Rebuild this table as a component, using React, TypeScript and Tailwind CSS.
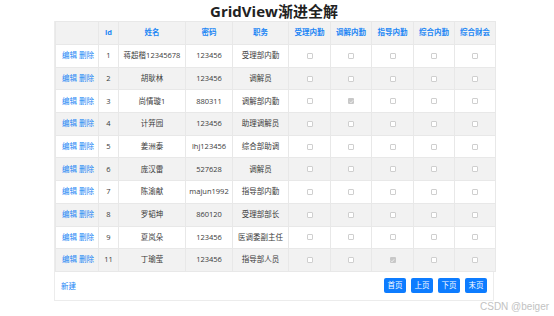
import React from "react";

const rows: [string, string, string, string, number[]][] = [
  ["1", "蒋超楷12345678", "123456", "受理部内勤", []],
  ["2", "胡耿林", "123456", "调解员", []],
  ["3", "尚情璇1", "880311", "调解部内勤", [1]],
  ["4", "计笄园", "123456", "助理调解员", []],
  ["5", "姜洲泰", "lhj123456", "综合部助调", []],
  ["6", "庞汉雷", "527628", "调解员", []],
  ["7", "陈渝献", "majun1992", "指导部内勤", []],
  ["8", "罗韬坤", "860120", "受理部部长", []],
  ["9", "夏岚朵", "123456", "医调委副主任", []],
  ["11", "丁瑜莹", "123456", "指导部人员", [2]],
];

const widths = [43, 20, 67, 47, 56, 42, 41, 42, 41, 41];
const heads = ["", "id", "姓名", "密码", "职务", "受理内勤", "调解内勤", "指导内勤", "综合内勤", "综合财会"];

function Box({ checked }: { checked: boolean }) {
  return checked ? (
    <span className="inline-flex w-[6px] h-[6px] rounded-[1px] bg-[#c8c8c8] items-center justify-center">
      <svg width="5" height="5" viewBox="0 0 6 6">
        <path d="M1 3.2 L2.4 4.6 L5 1.6" stroke="#f4f4f4" strokeWidth="1" fill="none" />
      </svg>
    </span>
  ) : (
    <span className="inline-block w-[6px] h-[6px] rounded-[1px] border border-[#cfcfcf] bg-white" />
  );
}

export default function App() {
  return (
    <div
      className="w-[554px] h-[316px] bg-white relative overflow-hidden"
      style={{ fontFamily: '"Open Sans","Noto Sans CJK SC",sans-serif' }}
    >
      <div className="w-[440px] ml-[54px]">
        <div className="h-[21px] flex items-center justify-center text-[15px] font-bold text-[#222] leading-none pt-[1px]">
          GridView渐进全解
        </div>
        <div className="border border-[#ececec] border-t-0">
          <table className="w-[440px] table-fixed border-collapse text-[7.5px] text-[#3a3a3a]">
            <colgroup>
              {widths.map((w, i) => (
                <col key={i} style={{ width: w }} />
              ))}
            </colgroup>
            <thead>
              <tr className="h-[23px] bg-[#f2f2f2]">
                {heads.map((h, i) => (
                  <th key={i} className="border border-[#e8e8e8] font-bold text-[#2186f5] text-center p-0">
                    {h}
                  </th>
                ))}
              </tr>
            </thead>
            <tbody>
              {rows.map((r, ri) => (
                <tr key={ri} className={`h-[22.7px] ${ri % 2 === 1 ? "bg-[#f2f2f2]" : "bg-white"}`}>
                  <td className="border border-[#e8e8e8] text-left pl-[6px] text-[#2186f5] p-0 whitespace-nowrap">
                    编辑 删除
                  </td>
                  <td className="border border-[#e8e8e8] text-center p-0">{r[0]}</td>
                  <td className="border border-[#e8e8e8] text-center p-0 whitespace-nowrap">{r[1]}</td>
                  <td className="border border-[#e8e8e8] text-center p-0">{r[2]}</td>
                  <td className="border border-[#e8e8e8] text-center p-0 whitespace-nowrap">{r[3]}</td>
                  {[0, 1, 2, 3, 4].map((c) => (
                    <td key={c} className="border border-[#e8e8e8] text-center p-0">
                      <div className="flex justify-center items-center">
                        <Box checked={r[4].includes(c)} />
                      </div>
                    </td>
                  ))}
                </tr>
              ))}
            </tbody>
          </table>
          <div className="h-[28px] flex items-center justify-between pl-[6px] pr-[6px] text-[7.5px]">
            <span className="text-[#2186f5] mt-[2px]">新建</span>
            <div className="flex gap-[5px]">
              {["首页", "上页", "下页", "末页"].map((b) => (
                <span
                  key={b}
                  className="w-[22px] h-[15px] rounded-[2px] bg-[#0d7cff] text-white flex items-center justify-center"
                >
                  {b}
                </span>
              ))}
            </div>
          </div>
        </div>
      </div>
      <div
        className="absolute left-[480px] top-[302px] text-[10px] text-[#c2c2c2] whitespace-nowrap leading-none"
        style={{ fontFamily: '"Liberation Sans",sans-serif' }}
      >
        CSDN @beiger
      </div>
    </div>
  );
}
